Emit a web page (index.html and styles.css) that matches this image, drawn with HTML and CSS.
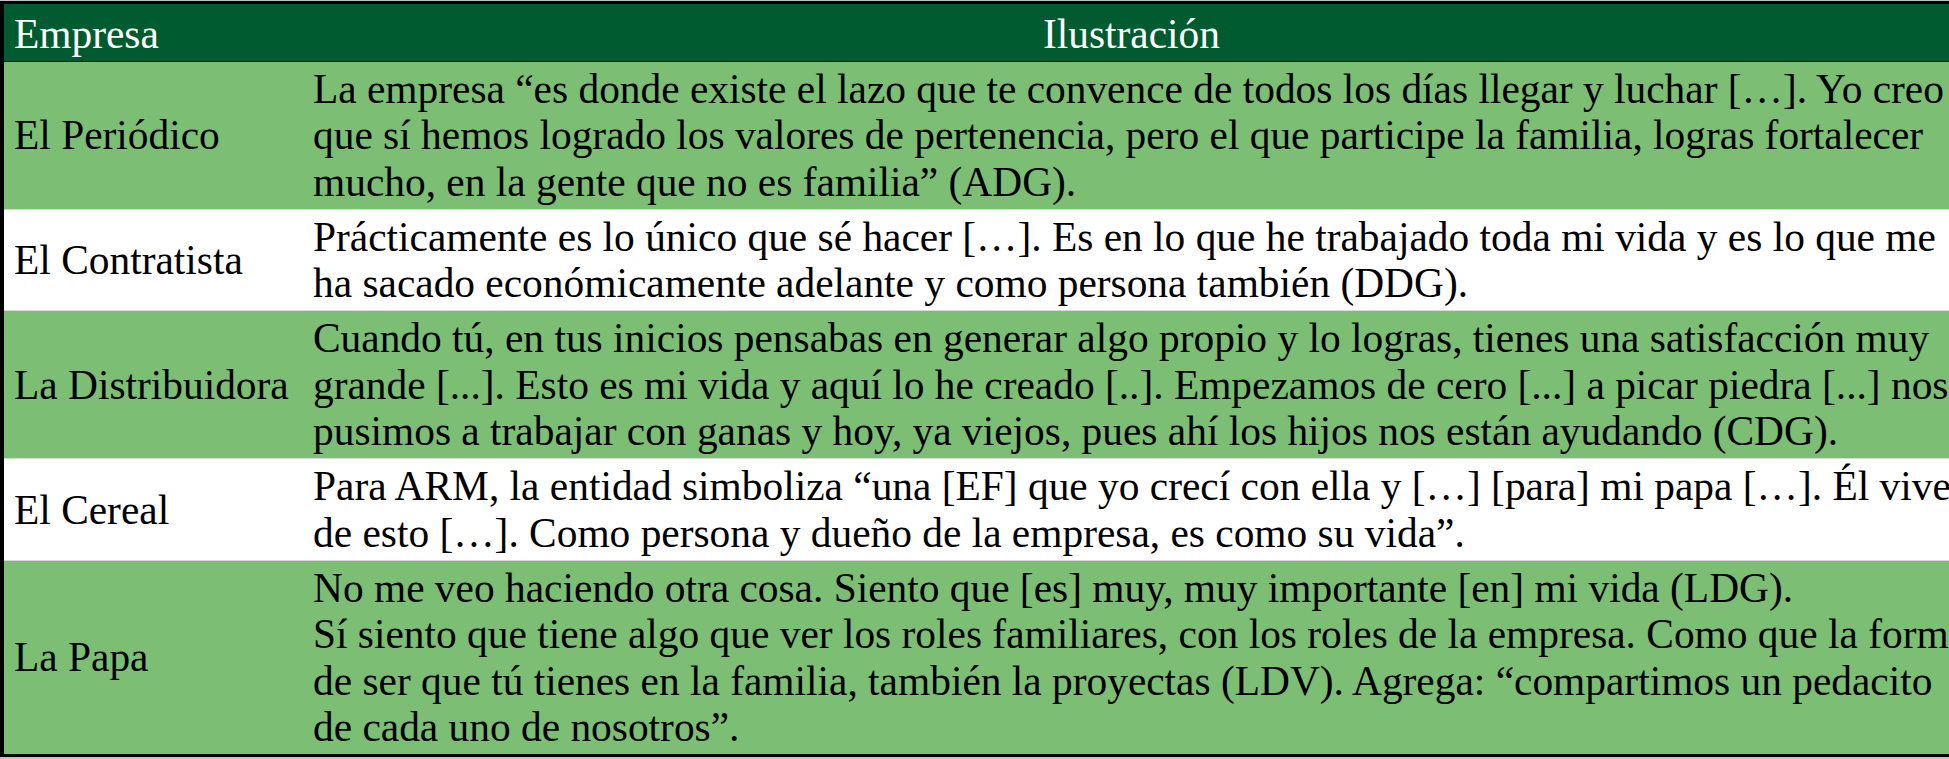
FILE: index.html
```html
<!DOCTYPE html>
<html lang="es">
<head>
<meta charset="utf-8">
<title>Empresa e ilustración</title>
<link rel="stylesheet" href="styles.css">
</head>
<body>
<div class="frame">
<table class="quotes">
  <thead>
    <tr class="head-row">
      <th class="col-company">Empresa</th>
      <th class="col-quote">Ilustración</th>
    </tr>
  </thead>
  <tbody>
    <tr class="row green">
      <td class="company">El Periódico</td>
      <td class="quote">La empresa “es donde existe el lazo que te convence de todos los días llegar y luchar […]. Yo creo<br>que sí hemos logrado los valores de pertenencia, pero el que participe la familia, logras fortalecer<br>mucho, en la gente que no es familia” (ADG).</td>
    </tr>
    <tr class="row white">
      <td class="company">El Contratista</td>
      <td class="quote">Prácticamente es lo único que sé hacer […]. Es en lo que he trabajado toda mi vida y es lo que me<br>ha sacado económicamente adelante y como persona también (DDG).</td>
    </tr>
    <tr class="row green">
      <td class="company">La Distribuidora</td>
      <td class="quote">Cuando tú, en tus inicios pensabas en generar algo propio y lo logras, tienes una satisfacción muy<br>grande [...]. Esto es mi vida y aquí lo he creado [..]. Empezamos de cero [...] a picar piedra [...] nos<br>pusimos a trabajar con ganas y hoy, ya viejos, pues ahí los hijos nos están ayudando (CDG).</td>
    </tr>
    <tr class="row white">
      <td class="company">El Cereal</td>
      <td class="quote">Para ARM, la entidad simboliza “una [EF] que yo crecí con ella y […] [para] mi papa […]. Él vive<br>de esto […]. Como persona y dueño de la empresa, es como su vida”.</td>
    </tr>
    <tr class="row green last">
      <td class="company">La Papa</td>
      <td class="quote">No me veo haciendo otra cosa. Siento que [es] muy, muy importante [en] mi vida (LDG).<br>Sí siento que tiene algo que ver los roles familiares, con los roles de la empresa. Como que la forma<br>de ser que tú tienes en la familia, también la proyectas (LDV). Agrega: “compartimos un pedacito<br>de cada uno de nosotros”.</td>
    </tr>
  </tbody>
</table>
</div>
</body>
</html>
```
FILE: styles.css
```css
html, body {
  margin: 0;
  padding: 0;
}
body {
  background: #c4c4c4;
  overflow: hidden;
  width: 1949px;
  height: 759px;
}
.frame {
  padding-top: 1px;
  width: 1949px;
  overflow: hidden;
}
.quotes {
  border-collapse: collapse;
  width: 1960px;
  table-layout: fixed;
  font-family: "Liberation Serif", "Times New Roman", serif;
  font-size: 41.4px;
  line-height: 46.3px;
  color: #000;
  border-top: 3px solid #000;
  border-left: 4px solid #000;
  border-bottom: 3px solid #000;
}
.col-company {
  width: 279px;
}
.head-row th {
  background: #005b30;
  color: #fff;
  font-weight: normal;
  padding: 7px 10px 3.7px 10px;
  border-bottom: 1px solid #111;
  white-space: nowrap;
}
.head-row .col-company {
  text-align: left;
}
.head-row .col-quote {
  text-align: center;
}
.row td {
  padding: 4px 10px 4px 10px;
  border-bottom: 1px solid #d8dcd6;
  white-space: nowrap;
}
.row.last td {
  border-bottom: none;
}
.row.green td {
  background: #7cbe73;
}
.row.white td {
  background: #ffffff;
}
.company {
  vertical-align: middle;
  text-align: left;
}
.quote {
  vertical-align: top;
  text-align: left;
  overflow: hidden;
}
```
